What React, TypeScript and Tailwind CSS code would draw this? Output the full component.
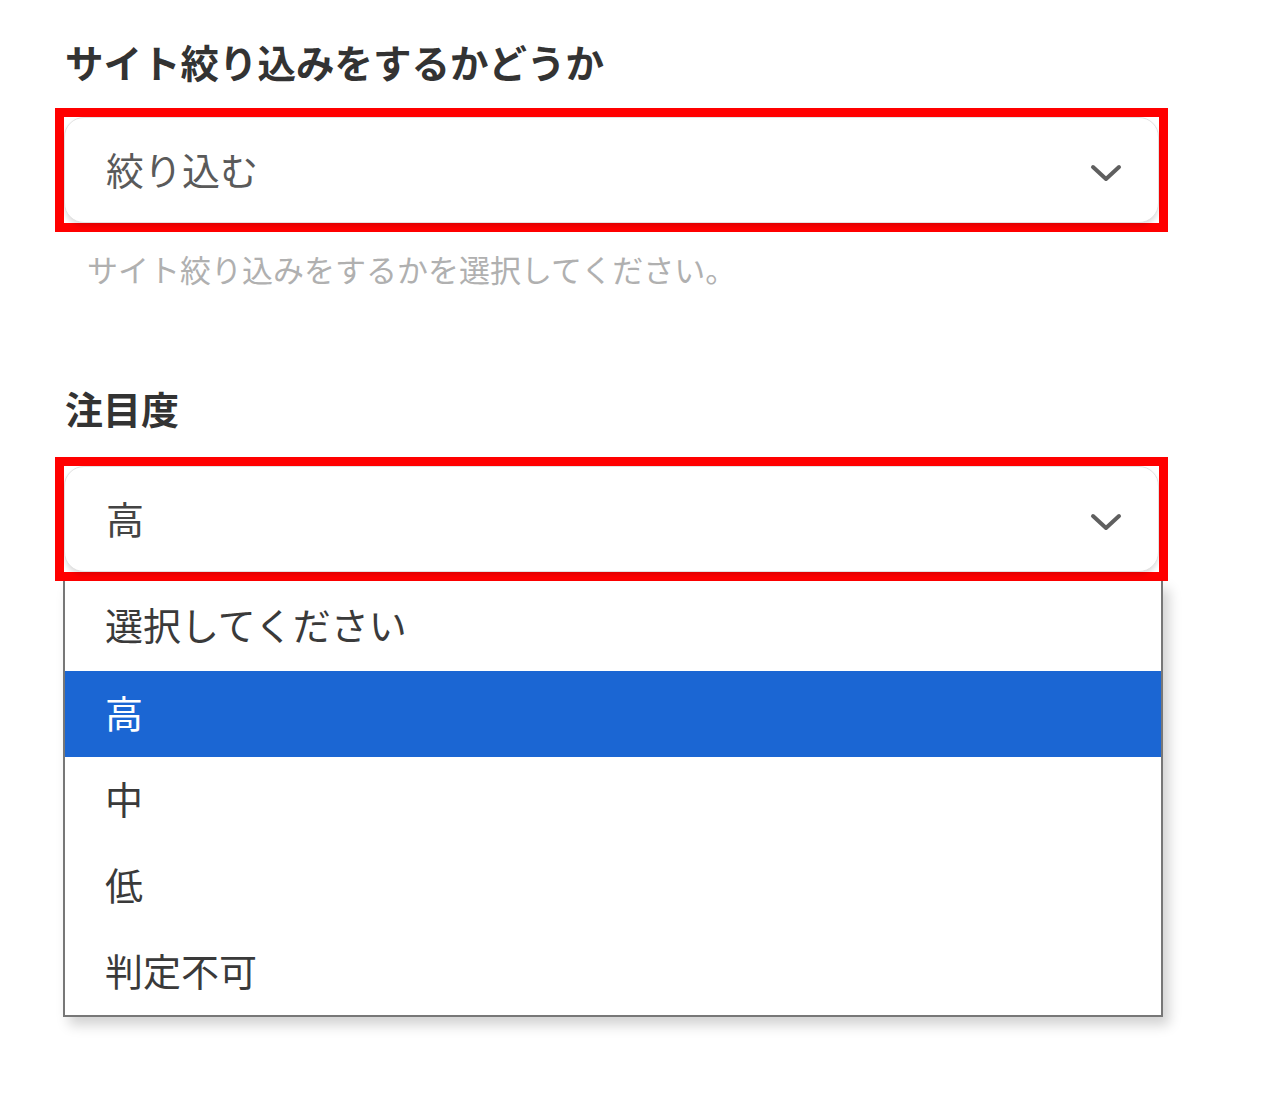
const jp = { fontFamily: '"Noto Sans CJK JP", "Noto Sans", sans-serif' }

const options = ['選択してください', '高', '中', '低', '判定不可']

function Chevron() {
  return (
    <svg width="32" height="20" viewBox="0 0 32 20" className="shrink-0 mt-[6px]">
      <polyline points="3,4 16,16 29,4" fill="none" stroke="#5f5f5f" strokeWidth="4" strokeLinecap="round" strokeLinejoin="round" />
    </svg>
  )
}

function FakeSelect({ value, muted }: { value: string; muted?: boolean }) {
  return (
    <div className="border-[9px] border-[#ff0000] h-[124px] w-[1113px]">
      <div className="h-full flex items-center justify-between pl-[41px] pr-[36px] bg-white rounded-[20px] border border-[#e2e2e2] shadow-[0_3px_4px_rgba(0,0,0,0.12)]">
        <span className={`text-[38px] leading-[50px] pb-[2px] ${muted ? 'text-[#5a5a5a]' : 'text-[#444]'}`}>{value}</span>
        <Chevron />
      </div>
    </div>
  )
}

export default function App() {
  return (
    <div className="min-h-[1111px] w-[1285px] bg-white pl-[55px] pt-[36px]" style={jp}>
      {/* Site filter */}
      <div className="text-[38.5px] leading-[50px] font-bold text-[#333] pl-[10px]">サイト絞り込みをするかどうか</div>
      <div className="mt-[22px]">
        <FakeSelect value="絞り込む" muted />
      </div>
      <div className="mt-[17px] pl-[32px] text-[31px] leading-[40px] text-[#b0b0b0]">サイト絞り込みをするかを選択してください。</div>

      {/* Attention level */}
      <div className="mt-[94px] text-[38px] leading-[50px] font-bold text-[#333] pl-[10px]">注目度</div>
      <div className="mt-[24px]">
        <FakeSelect value="高" />
      </div>

      {/* Open dropdown list */}
      <div className="ml-[8px] w-[1100px] bg-white border-x-2 border-b-2 border-[#777] shadow-[6px_8px_12px_rgba(0,0,0,0.18)]">
        {options.map((opt, idx) => (
          <div
            key={opt}
            className={`flex items-center pl-[40px] pb-[4px] text-[38px] leading-[50px] ${idx === 0 ? 'h-[90px]' : 'h-[86px]'} ${idx === 1 ? 'bg-[#1b66d3] text-white' : 'text-[#3a3a3a]'}`}
          >
            {opt}
          </div>
        ))}
      </div>
    </div>
  )
}
